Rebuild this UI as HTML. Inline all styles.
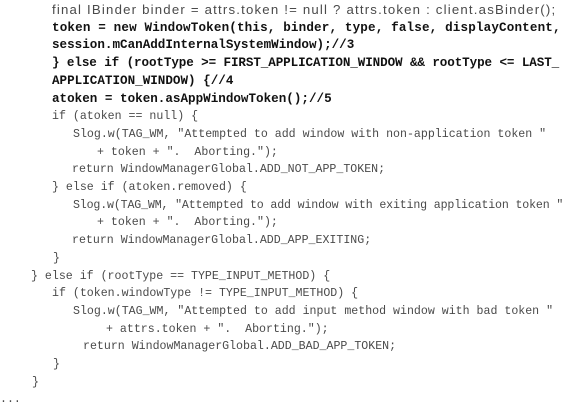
<!DOCTYPE html>
<html><head><style>
html,body{margin:0;padding:0;background:#fff;width:566px;height:404px;overflow:hidden}
.l{position:absolute;white-space:pre;font-family:"Liberation Mono",monospace;font-size:11.6px;color:#4a4a4a;line-height:17.7px;height:17.7px}
.b{font-weight:bold;color:#111;font-size:12.6px}
.p{font-family:"Liberation Sans",sans-serif;font-size:13.2px;color:#4a4a4a;letter-spacing:1.2px}
</style></head><body>
<div class="l p" style="left:52px;top:1px">final IBinder binder = attrs.token != null ? attrs.token : client.asBinder();</div>
<div class="l b" style="left:52px;top:19.7px;letter-spacing:0.15px">token = new WindowToken(this, binder, type, false, displayContent,</div>
<div class="l b" style="left:52px;top:37.4px">session.mCanAddInternalSystemWindow);//3</div>
<div class="l b" style="left:52px;top:55.1px;letter-spacing:-0.1px">} else if (rootType &gt;= FIRST_APPLICATION_WINDOW &amp;&amp; rootType &lt;= LAST_</div>
<div class="l b" style="left:52px;top:72.8px">APPLICATION_WINDOW) {//4</div>
<div class="l b" style="left:52px;top:90.5px">atoken = token.asAppWindowToken();//5</div>
<div class="l" style="left:52px;top:108.2px">if (atoken == null) {</div>
<div class="l" style="left:73px;top:125.9px">Slog.w(TAG_WM, "Attempted to add window with non-application token "</div>
<div class="l" style="left:97px;top:143.6px">+ token + ".  Aborting.");</div>
<div class="l" style="left:72px;top:161.3px">return WindowManagerGlobal.ADD_NOT_APP_TOKEN;</div>
<div class="l" style="left:52px;top:179px">} else if (atoken.removed) {</div>
<div class="l" style="left:73px;top:196.7px;letter-spacing:-0.15px">Slog.w(TAG_WM, "Attempted to add window with exiting application token "</div>
<div class="l" style="left:97px;top:214.4px">+ token + ".  Aborting.");</div>
<div class="l" style="left:72px;top:232.1px">return WindowManagerGlobal.ADD_APP_EXITING;</div>
<div class="l" style="left:53px;top:249.8px">}</div>
<div class="l" style="left:31px;top:267.5px">} else if (rootType == TYPE_INPUT_METHOD) {</div>
<div class="l" style="left:52px;top:285.2px">if (token.windowType != TYPE_INPUT_METHOD) {</div>
<div class="l" style="left:73px;top:302.9px">Slog.w(TAG_WM, "Attempted to add input method window with bad token "</div>
<div class="l" style="left:106px;top:320.6px">+ attrs.token + ".  Aborting.");</div>
<div class="l" style="left:83px;top:338.3px">return WindowManagerGlobal.ADD_BAD_APP_TOKEN;</div>
<div class="l" style="left:53px;top:356px">}</div>
<div class="l" style="left:32px;top:373.7px">}</div>
<div class="l" style="left:0px;top:391.4px">...</div>
</body></html>
